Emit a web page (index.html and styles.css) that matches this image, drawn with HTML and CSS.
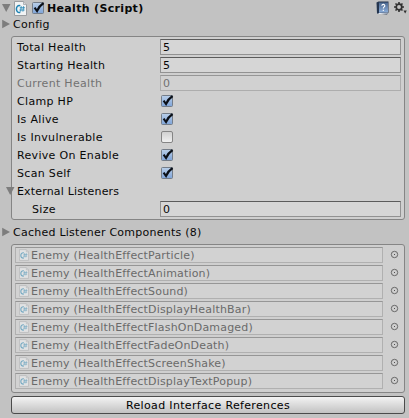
FILE: index.html
```html
<!DOCTYPE html>
<html lang="en">
<head>
<meta charset="utf-8">
<title>Health (Script)</title>
<link rel="stylesheet" href="styles.css">
</head>
<body>
<svg class="defs" width="0" height="0" aria-hidden="true">
  <defs>
    <linearGradient id="blue" x1="0" y1="0" x2="0" y2="1"><stop offset="0" stop-color="#b9cfe9"/><stop offset="1" stop-color="#7fa4d8"/></linearGradient>
    <linearGradient id="book" x1="0" y1="0" x2="0" y2="1"><stop offset="0" stop-color="#4a678f"/><stop offset="1" stop-color="#8fb0dc"/></linearGradient>
  </defs>
  <symbol id="check" viewBox="0 0 14 14">
    <rect x="1.5" y="1.5" width="11" height="11" rx="1" fill="url(#blue)" stroke="#747d89"/>
    <path d="M3.6 6.600 6 10C7.400 7 9.500 4 12.600 2" fill="none" stroke="#0b1018" stroke-width="2.100"/>
  </symbol>
  <symbol id="script" viewBox="0 0 13 15">
    <path d="M.5.5h9l3 3v11H.5z" fill="#f1f3f4" stroke="#9a9da0"/>
    <path d="M9.5.5v3h3" fill="#d5d8da" stroke="#9a9da0" stroke-width=".7"/>
    <path d="M6.3 4.7C3.8 4.1 2.4 5.8 2.4 8s1.4 4 3.9 3.3" fill="none" stroke="#1d83b4" stroke-width="1.5"/>
    <path d="M7.3 5.2 6.6 10.6M9.6 5.2 8.9 10.6M5.8 6.8H11M5.4 9h5.2" fill="none" stroke="#2a8ab8" stroke-width=".9"/>
  </symbol>
  <symbol id="pick" viewBox="0 0 9 9">
    <circle cx="4.5" cy="4.5" r="3.2" fill="none" stroke="#686868" stroke-width="1"/>
    <rect x="4" y="4" width="1" height="1" fill="#505050"/>
  </symbol>
</svg>

<header class="header">
  <svg class="arrow" viewBox="0 0 10 10"><path d="M1 1h8.500L5.200 9z"/></svg>
  <svg class="script"><use href="#script"/></svg>
  <svg class="check"><use href="#check"/></svg>
  <h1 class="title">Health (Script)</h1>
  <svg class="help" viewBox="0 0 13 14">
    <path d="M.5 1.500 2.500.5H12.500V11.500L11 13.500 1 12.500z" fill="#24354f"/>
    <path d="M2.500 12.600 11.800 12" stroke="#e7edf5"/>
    <path d="M3 1.500h9v9.800l-9 .5z" fill="url(#book)"/>
    <path d="M5.800 4.700C6 2.900 9 3 8.800 4.900 8.700 6 7.300 6 7.300 7.600M7.300 8.700v1.200" fill="none" stroke="#fff" stroke-width="1.100"/>
  </svg>
  <svg class="gear" viewBox="0 0 13 12">
    <circle cx="5" cy="5" r="2.800" fill="none" stroke="#303030" stroke-width="1.700"/>
    <path d="M5 0v2M5 8v2M0 5h2M8 5h2M1.500 1.500l1.300 1.300M7.200 7.200l1.300 1.300M8.500 1.500 7.200 2.800M2.800 7.200 1.500 8.500" stroke="#303030" stroke-width="1.600"/>
    <path d="M9.500 8.500h3.300l-1.600 3z" fill="#303030"/>
  </svg>
</header>
<div class="fold"><svg class="arrow" viewBox="0 0 10 10"><path d="M1.200 .8v8.400L9 5z"/></svg><span>Config</span></div>

<section class="panel fields">
  <div class="row"><label>Total Health</label><div class="input">5</div></div>
  <div class="row"><label>Starting Health</label><div class="input">5</div></div>
  <div class="row off"><label>Current Health</label><div class="input">0</div></div>
  <div class="row"><label>Clamp HP</label><svg class="check"><use href="#check"/></svg></div>
  <div class="row"><label>Is Alive</label><svg class="check"><use href="#check"/></svg></div>
  <div class="row"><label>Is Invulnerable</label><span class="unchecked"></span></div>
  <div class="row"><label>Revive On Enable</label><svg class="check"><use href="#check"/></svg></div>
  <div class="row"><label>Scan Self</label><svg class="check"><use href="#check"/></svg></div>
  <div class="row"><svg class="arrow hang" viewBox="0 0 10 10"><path d="M1 1h8.500L5.200 9z"/></svg><label class="tight">External Listeners</label></div>
  <div class="row"><label class="indent">Size</label><div class="input">0</div></div>
</section>

<div class="fold cached"><svg class="arrow" viewBox="0 0 10 10"><path d="M1.200 .8v8.400L9 5z"/></svg><span>Cached Listener Components (8)</span></div>

<section class="panel refs">
  <div class="ref"><div class="object"><svg><use href="#script"/></svg><span>Enemy (HealthEffectParticle)</span></div><svg class="pick"><use href="#pick"/></svg></div>
  <div class="ref"><div class="object"><svg><use href="#script"/></svg><span>Enemy (HealthEffectAnimation)</span></div><svg class="pick"><use href="#pick"/></svg></div>
  <div class="ref"><div class="object"><svg><use href="#script"/></svg><span>Enemy (HealthEffectSound)</span></div><svg class="pick"><use href="#pick"/></svg></div>
  <div class="ref"><div class="object"><svg><use href="#script"/></svg><span>Enemy (HealthEffectDisplayHealthBar)</span></div><svg class="pick"><use href="#pick"/></svg></div>
  <div class="ref"><div class="object"><svg><use href="#script"/></svg><span>Enemy (HealthEffectFlashOnDamaged)</span></div><svg class="pick"><use href="#pick"/></svg></div>
  <div class="ref"><div class="object"><svg><use href="#script"/></svg><span>Enemy (HealthEffectFadeOnDeath)</span></div><svg class="pick"><use href="#pick"/></svg></div>
  <div class="ref"><div class="object"><svg><use href="#script"/></svg><span>Enemy (HealthEffectScreenShake)</span></div><svg class="pick"><use href="#pick"/></svg></div>
  <div class="ref"><div class="object"><svg><use href="#script"/></svg><span>Enemy (HealthEffectDisplayTextPopup)</span></div><svg class="pick"><use href="#pick"/></svg></div>
</section>
<button class="reload" type="button">Reload Interface References</button>
</body>
</html>
```
FILE: styles.css
```css
* { box-sizing: border-box; }
body {
  margin: 0;
  width: 409px;
  height: 418px;
  overflow: hidden;
  background: #c2c2c2;
  color: #080808;
  font: 11px/16px "DejaVu Sans", sans-serif;
  letter-spacing: .25px;
}
svg { display: block; flex: none; }
.defs { position: absolute; }
.header { display: flex; height: 16px; padding-left: 1px; align-items: center; }
.arrow { width: 10px; height: 10px; fill: #7d7d7d; }
.script { width: 13px; height: 15px; margin-left: 3px; }
.check { width: 14px; height: 14px; }
.header .check { margin-left: 4px; }
.title { margin: 0 auto 0 2px; padding-top: 1px; font-size: 11px; line-height: 16px; letter-spacing: .33px; }
.help { width: 13px; height: 14px; margin-right: 5px; }
.gear { width: 13px; height: 12px; margin-right: 2px; }
.fold { display: flex; height: 16px; align-items: center; padding-left: 1px; }
.fold span { margin-left: 2px; padding-top: 2px; }
.cached { margin-top: 4px; }
.panel {
  width: 394px;
  margin-left: 11px;
  border: 1px solid #858585;
  border-radius: 3px;
  background: #cfcfcf;
}
.fields { height: 184px; margin-top: 4px; padding: 2px 3px 0 5px; }
.row { display: flex; height: 16px; margin-bottom: 2px; align-items: center; }
.row label { width: 143px; flex: none; padding-top: 2px; letter-spacing: .32px; }
.row .tight { letter-spacing: .17px; }
.row .indent { padding-left: 15px; }
.hang { margin-left: -12px; margin-right: 2px; }
.input {
  flex: 1;
  height: 16px;
  padding-left: 2px;
  border: 1px solid #929292;
  border-top-color: #5c5c5c;
  background: #d6d6d6;
  line-height: 15px;
}
.off { color: #727272; }
.off .input { border-color: #adadad; border-top-color: #969696; background: #d1d1d1; }
.unchecked {
  width: 12px;
  height: 12px;
  margin-left: 1px;
  border: 1px solid #858585;
  border-radius: 2px;
  background: linear-gradient(#d0d0d0, #f0f0f0);
}
.refs { height: 149px; margin-top: 4px; padding: 2px 5px 0 3px; }
.ref { display: flex; height: 16px; margin-bottom: 2px; align-items: center; justify-content: space-between; }
.object {
  display: flex;
  width: 368px;
  height: 16px;
  padding-left: 3px;
  align-items: center;
  border: 1px solid #b0b0b0;
  border-top-color: #969696;
  background: #d2d2d2;
  color: #6a6a6a;
}
.object svg { width: 10px; height: 12px; margin-right: 2px; opacity: .5; }
.object span { padding-top: 1px; letter-spacing: .18px; }
.pick { width: 9px; height: 9px; margin-bottom: 1px; }
.reload {
  display: block;
  width: 394px;
  height: 18px;
  margin: 3px 0 0 11px;
  padding: 0;
  border: 1px solid #4b4b4b;
  border-radius: 3px;
  background: linear-gradient(#f3f3f3, #c2c2c2);
  color: #000;
  font: 11px/15px "DejaVu Sans", sans-serif;
  letter-spacing: .34px;
}
```
